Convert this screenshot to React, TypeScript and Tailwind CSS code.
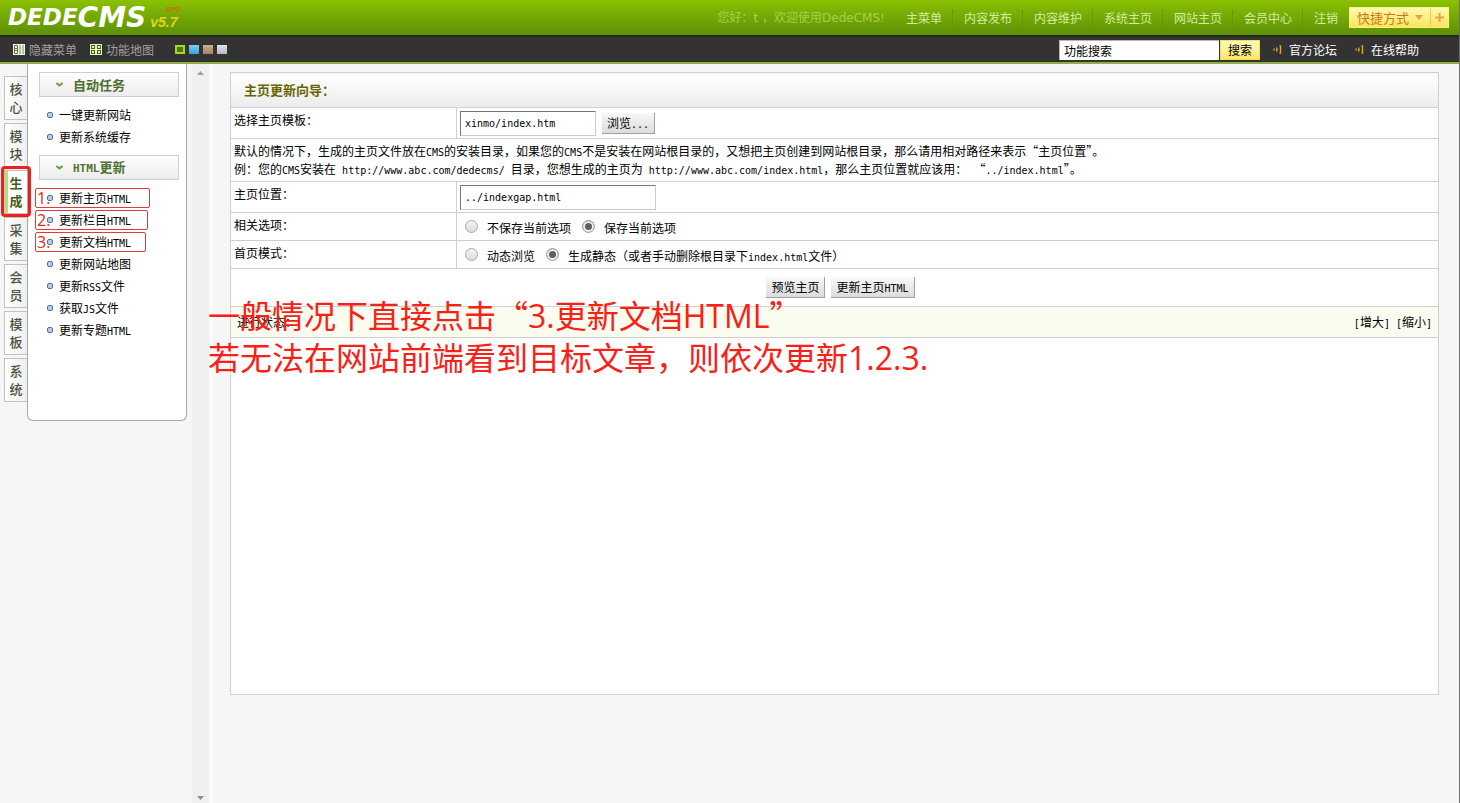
import type {ReactNode} from "react";

const topLinks = ['主菜单', '内容发布', '内容维护', '系统主页', '网站主页', '会员中心', '注销']

const tabs = ['核心', '模块', '生成', '采集', '会员', '模板', '系统']

const menu = [
    {title: '自动任务', items: [{name: '一键更新网站'}, {name: '更新系统缓存'}]},
    {
        title: 'HTML更新',
        items: [
            {name: '更新主页HTML', mark: '1.', box: 'w-[115px]'},
            {name: '更新栏目HTML', mark: '2.', box: 'w-[113px]'},
            {name: '更新文档HTML', mark: '3.', box: 'w-[111px]'},
            {name: '更新网站地图'},
            {name: '更新RSS文件'},
            {name: '获取JS文件'},
            {name: '更新专题HTML'},
        ]
    },
]

const swatches = [
    'border-2 border-[#a6d82a] bg-[#4c7a06]',
    'bg-linear-to-b from-[#7ed0f5] to-[#2d9fdc]',
    'bg-linear-to-b from-[#cdb08a] to-[#a5825c]',
    'bg-linear-to-b from-[#e2e4ea] to-[#b3b7c0]',
]

// Latin runs are set in a 6px wide monospace, half of a 12px ideograph
const Mixed = ({text}: { text: string }) => (
    <>
        {text.split(/([ -~]+)/).map((part, i) => i % 2
            ? <span key={i} className="font-['DejaVu_Sans_Mono',monospace] text-[10px] leading-none">{part}</span>
            : part)}
    </>
)

const Radio = ({name, label, checked}: { name: string, label: string, checked?: boolean }) => (
    <label className="flex items-center gap-[9px]">
        <input type="radio" name={name} defaultChecked={checked}
               className="appearance-none size-[13px] mb-1 rounded-full border border-[#a8a8a8] bg-linear-to-b from-[#f4f4f4] to-[#dcdcdc] checked:bg-none checked:bg-[#606060] checked:shadow-[inset_0_0_0_2px_#f0f0f0]"/>
        <span><Mixed text={label}/></span>
    </label>
)

const GrayButton = ({children}: { children: ReactNode }) => (
    <button type="button"
            className="h-[21px] px-[5px] border-r border-b border-[#a0a0a0] bg-linear-to-b from-[#f8f8f8] to-[#dcdcdc] leading-5">
        {children}
    </button>
)

const SoundIcon = () => (
    <svg width="10" height="9" viewBox="0 0 10 9" fill="none" stroke="#d8ae22" strokeWidth="1.4">
        <path d="M1 3.500v2M3.500 2.500q1 2 0 4M6.500 1h1v7h-1"/>
    </svg>
)

const field = "h-[25px] px-1 border border-t-[#767676] border-l-[#767676] border-r-[#cccccc] border-b-[#cccccc] bg-white font-['DejaVu_Sans_Mono',monospace] text-[10px]"
const cell = "border border-[#d0d0d0] px-[3px]"
const labelCell = cell + " w-[226px] pt-[3px] align-top"

const Header = () => (
    <header>
        <div
            className="flex h-[35px] items-center justify-between bg-linear-to-b from-[#8bc100] to-[#5c8f08] pl-2 pr-2.5">
            <div className="flex h-full">
                <h1 className="flex h-full items-center font-['DejaVu_Sans',sans-serif] font-bold italic text-white">
                    <span className="text-[23px]">DEDE</span>
                    <span className="text-[28px]">CMS</span>
                </h1>
                <div className="flex w-[34px] flex-col pl-1 pt-[5px] font-['Liberation_Sans',sans-serif] font-bold italic">
                    <span className="text-right text-[8px] leading-[9px] text-[#c9700c]">SP2</span>
                    <span className="text-sm leading-4 text-[#e0d51e]">v5.7</span>
                </div>
            </div>
            <div className="flex items-center">
                <p className="mr-2.5 text-[#a5d04e]">您好：<span
                    className="font-['DejaVu_Sans',sans-serif]">t </span>，欢迎使用<span
                    className="font-['DejaVu_Sans',sans-serif]">DedeCMS!</span></p>
                <nav className="flex pr-px">
                    {topLinks.map((el) => (
                        <a key={el} href="#"
                           className="border-r border-[#659808] pl-[11px] pr-2.5 leading-4 text-[#d3eda0] last:border-0">
                            {el}
                        </a>
                    ))}
                </nav>
                <div
                    className="flex h-[21px] border border-[#fff27a] bg-linear-to-b from-[#fff9b0] to-[#fbe45c] text-[#c87a12]">
                    <button type="button" className="flex items-center gap-1.5 px-[7px] text-[13px]">
                        快捷方式
                        <svg width="8" height="5" viewBox="0 0 8 5" fill="#e8a33a">
                            <path d="M0 0h8L4 5z"/>
                        </svg>
                    </button>
                    <button type="button" aria-label="添加"
                            className="flex w-[18px] items-center justify-center border-l border-[#efc94a]">
                        <svg width="9" height="9" viewBox="0 0 9 9" stroke="#eda63c" strokeWidth="2">
                            <path d="M4.500 0v9M0 4.500h9"/>
                        </svg>
                    </button>
                </div>
            </div>
        </div>
        <div
            className="flex h-[29px] items-center justify-between border-t-2 border-t-[#232b12] border-b-2 border-b-[#8fae45] bg-[#333333] pl-[13px] pr-[40px]">
            <div className="flex items-center text-[#a0a0a0]">
                <a href="#" className="flex items-center gap-1">
                    <svg width="12" height="11" viewBox="0 0 12 11">
                        <path fill="#f2f5e8" d="M0 0h12v11H0z"/>
                        <path fill="#ffffff" stroke="#5d7a26" d="M1.500 1.500h3v8h-3z"/>
                        <path fill="#b9bda8" d="M6 1h2v9H6zM9 1h2v9H9z"/>
                        <path fill="#5d7a26" d="M2 4h2v1H2zM2 6h2v1H2z"/>
                    </svg>
                    隐藏菜单
                </a>
                <a href="#" className="ml-[13px] flex items-center gap-1">
                    <svg width="12" height="11" viewBox="0 0 12 11">
                        <path fill="#e6f2c4" d="M0 0h12v11H0z"/>
                        <path fill="#45651a" d="M1 1h4v4H1zM7 1h4v4H7zM1 6h4v4H1zM7 6h4v4H7z"/>
                        <path fill="#e6f2c4" d="M2 2h2v2H2zM8 2h2v2H8zM2 7h2v2H2zM8 7h2v2H8z"/>
                    </svg>
                    功能地图
                </a>
                <div className="ml-[21px] flex gap-1">
                    {swatches.map((el) => (
                        <button key={el} type="button" aria-label="皮肤" className={`h-[9px] w-2.5 ${el}`}/>
                    ))}
                </div>
            </div>
            <form className="flex items-center text-white">
                <input type="text" defaultValue="功能搜索" aria-label="功能搜索"
                       className="h-5 w-40 border-t border-l border-[#b5b5b5] bg-white px-1 text-black"/>
                <button type="button"
                        className="ml-px h-5 w-10 border border-[#f3df52] bg-linear-to-b from-[#fffbc0] to-[#fbe768] text-black">搜索
                </button>
                <a href="#" className="ml-[13px] flex items-center gap-1.5"><SoundIcon/>官方论坛</a>
                <a href="#" className="ml-[18px] flex items-center gap-1.5"><SoundIcon/>在线帮助</a>
            </form>
        </div>
    </header>
)

const Sidebar = () => (
    <aside className="flex w-[192px] items-start pl-1">
        <ul className="flex flex-col gap-[3px] pt-3">
            {tabs.map((el) => (
                <li key={el} className="relative">
                    <button type="button"
                            className={`h-11 w-[23px] border border-r-0 border-[#c2c2c2] text-[13px] leading-[18px] ${el === '生成' ? 'border-l-4 border-l-[#b9d98c] bg-white pl-px pr-1 font-bold text-[#3f5f1c]' : 'bg-linear-to-r from-white to-[#eeeeee] px-1 font-medium text-[#4a5240]'}`}>
                        {el}
                    </button>
                    {el === '生成' &&
                        <span className="absolute -top-1 -left-[3px] z-10 h-[51px] w-[30px] rounded-sm border-3 border-[#ee2020]"/>}
                </li>
            ))}
        </ul>
        <div className="h-[357px] w-40 rounded-b-md border border-t-0 border-[#a8a8a8] bg-white pt-2 pl-[11px] pr-[7px]">
            {menu.map((section) => (
                <section key={section.title}>
                    <h2 className="flex h-[25px] items-center gap-2.5 border border-[#cfcfcf] bg-linear-to-b from-white to-[#ececec] pl-4 text-[13px] font-bold text-[#4f6f30]">
                        <svg width="7" height="5" viewBox="0 0 7 5" fill="none" stroke="#6a9e4a" strokeWidth="2">
                            <path d="M.5 1l3 2.500 3-2.500"/>
                        </svg>
                        <span>
                            {section.title.startsWith('HTML')
                                ? <><span className="font-['DejaVu_Sans_Mono',monospace] text-[11px]">HTML</span>更新</>
                                : section.title}
                        </span>
                    </h2>
                    <ul className="pt-[7px] pb-[7px]">
                        {section.items.map((el: { name: string, mark?: string, box?: string }) => (
                            <li key={el.name} className="relative h-[22px]">
                                <a href="#" className="flex h-full items-center gap-1.5 pl-2">
                                    <span
                                        className="size-1.5 rounded-xs border border-[#5570a0] bg-[#b8cdea]"/>
                                    <span><Mixed text={el.name}/></span>
                                </a>
                                {el.mark &&
                                    <span
                                        className={`absolute top-px -left-1 h-5 rounded-xs border border-[#e23a3a] pl-px font-['Open_Sans',sans-serif] text-base leading-[19px] text-[#ee2020] ${el.box}`}>
                                        {el.mark}
                                    </span>}
                            </li>
                        ))}
                    </ul>
                </section>
            ))}
        </div>
    </aside>
)

const ScrollRail = () => (
    <div className="flex w-[17px] flex-col items-center justify-between bg-[#f0f0f0] pt-[7px] pb-[3px]">
        <svg width="7" height="4" viewBox="0 0 7 4" fill="#a0a0a0">
            <path d="M0 4h7L3.500 0z"/>
        </svg>
        <svg width="7" height="4" viewBox="0 0 7 4" fill="#8c8c8c">
            <path d="M0 0h7L3.500 4z"/>
        </svg>
    </div>
)

const UpdateForm = () => (
    <table className="w-full table-fixed border-collapse bg-white leading-[18px]">
        <colgroup>
            <col className="w-[226px]"/>
            <col/>
        </colgroup>
        <thead>
        <tr>
            <th colSpan={2}
                className="h-[35px] border border-[#d0d0d0] bg-linear-to-b from-white to-[#ececec] px-[13px] text-left text-[13px] font-bold text-[#666600]">
                主页更新向导：
            </th>
        </tr>
        </thead>
        <tbody>
        <tr className="h-[31px]">
            <td className={labelCell}><label htmlFor="template">选择主页模板：</label></td>
            <td className={cell}>
                <div className="flex items-center gap-1.5">
                    <input id="template" type="text" defaultValue="xinmo/index.htm" className={`w-[136px] ${field}`}/>
                    <GrayButton><Mixed text="浏览..."/></GrayButton>
                </div>
            </td>
        </tr>
        <tr className="h-[43px]">
            <td colSpan={2} className={cell}>
                <Mixed text="默认的情况下，生成的主页文件放在CMS的安装目录，如果您的CMS不是安装在网站根目录的，又想把主页创建到网站根目录，那么请用相对路径来表示“主页位置”。"/>
                <br/>
                <Mixed text="例：您的CMS安装在 http://www.abc.com/dedecms/ 目录，您想生成的主页为 http://www.abc.com/index.html，那么主页位置就应该用： “../index.html”。"/>
            </td>
        </tr>
        <tr className="h-[31px]">
            <td className={labelCell}><label htmlFor="position">主页位置：</label></td>
            <td className={cell}>
                <input id="position" type="text" defaultValue="../indexgap.html" className={`block w-[196px] ${field}`}/>
            </td>
        </tr>
        <tr className="h-[28px]">
            <td className={labelCell}>相关选项：</td>
            <td className={cell}>
                <div className="flex gap-[11px] pl-[5px] pt-[3px]">
                    <Radio name="save" label="不保存当前选项"/>
                    <Radio name="save" label="保存当前选项" checked/>
                </div>
            </td>
        </tr>
        <tr className="h-[28px]">
            <td className={labelCell}>首页模式：</td>
            <td className={cell}>
                <div className="flex gap-[11px] pl-[5px] pt-[3px]">
                    <Radio name="mode" label="动态浏览"/>
                    <Radio name="mode" label="生成静态（或者手动删除根目录下index.html文件）" checked/>
                </div>
            </td>
        </tr>
        <tr className="h-[38px]">
            <td colSpan={2} className={cell}>
                <div className="flex justify-center gap-1.5 pl-3">
                    <GrayButton>预览主页</GrayButton>
                    <GrayButton><Mixed text="更新主页HTML"/></GrayButton>
                </div>
            </td>
        </tr>
        <tr className="h-[31px] bg-[#f9fcef]">
            <td colSpan={2} className={cell}>
                <div className="flex justify-between px-[3px]">
                    <span>进行状态：</span>
                    <span className="flex gap-1.5">
                        <a href="#"><Mixed text="[增大]"/></a>
                        <a href="#"><Mixed text="[缩小]"/></a>
                    </span>
                </div>
            </td>
        </tr>
        <tr className="h-[357px]">
            <td colSpan={2} className={cell}></td>
        </tr>
        </tbody>
    </table>
)

const App = () => {
    return (
        <div
            className="flex min-h-screen flex-col border-r border-[#6e6e6e] bg-[#f6f6f6] font-['Noto_Sans_CJK_SC',sans-serif] text-xs text-black">
            <Header/>
            <div className="flex flex-1">
                <Sidebar/>
                <ScrollRail/>
                <main className="relative flex-1 border-l-4 border-[#fafafa] pt-2 pr-5 pl-[17px]">
                    <UpdateForm/>
                    <p className="pointer-events-none absolute top-[230px] -left-[5px] text-[32px] leading-[41px] whitespace-nowrap text-[#fb2016]">
                        一般情况下直接点击“<span className="font-['Open_Sans',sans-serif]">3.</span>更新文档<span
                        className="font-['Open_Sans',sans-serif]">HTML</span>”
                        <br/>
                        若无法在网站前端看到目标文章，则依次更新<span className="font-['Open_Sans',sans-serif]">1.2.3.</span>
                    </p>
                </main>
            </div>
        </div>
    );
};

export default App;
